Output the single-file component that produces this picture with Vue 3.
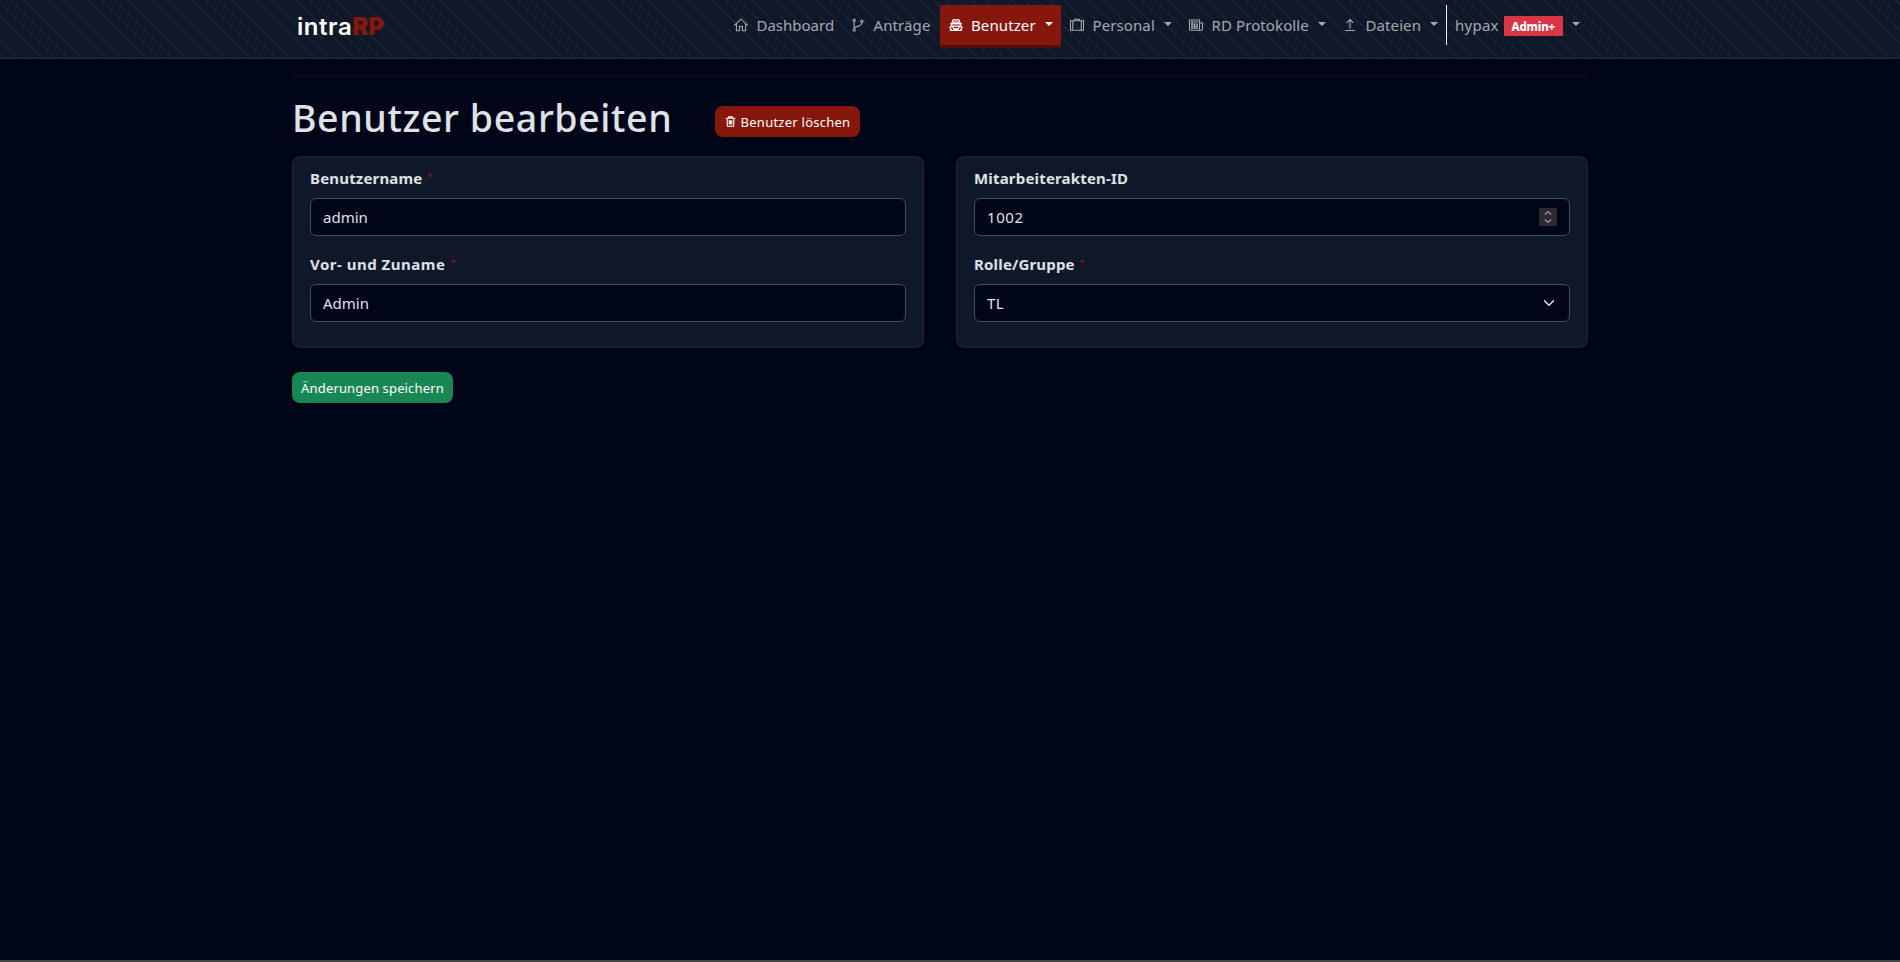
<script setup>
import { ref } from 'vue'

const nav = [
  { label: 'Dashboard', icon: 'home', cls: 'dashboard' },
  { label: 'Anträge', icon: 'branch', cls: 'requests' },
  { label: 'Benutzer', icon: 'user', cls: 'users', active: true, menu: true },
  { label: 'Personal', icon: 'suitcase', cls: 'staff', menu: true },
  { label: 'RD Protokolle', icon: 'news', cls: 'protocols', menu: true },
  { label: 'Dateien', icon: 'upload', cls: 'files', menu: true },
]
const username = ref('admin')
const fullname = ref('Admin')
const fileId = ref('1002')
const role = ref('TL')
</script>

<template>
  <div class="page">
    <header class="navbar">
      <div class="container bar">
        <a class="brand">intra<b>RP</b></a>
        <nav class="menu">
          <a v-for="n in nav" :key="n.label" class="link" :class="[n.cls, { active: n.active }]">
            <svg class="icon" viewBox="0 0 16 16" fill="none" stroke="currentColor" stroke-width="1.1">
              <path v-if="n.icon === 'home'" d="M1.2 8.4 8 2.2l6.800 6.200M3.400 6.800V13.700H6.500V9.200H9.500v4.500h3.100V6.800" />
              <g v-else-if="n.icon === 'branch'">
                <circle cx="4.200" cy="3.200" r="1.200" /><circle cx="4.200" cy="13" r="1.200" /><circle cx="11.800" cy="4.600" r="1.200" />
                <path d="M4.200 4.400v7.400M11.800 5.800c0 3-2.500 3.200-4.800 3.700-1.500.4-2.500 1-2.800 2.300" />
              </g>
              <g v-else-if="n.icon === 'user'">
                <path stroke-width="1.200" d="M4.100 6.500C4.300 3.900 5 2.700 6.100 2.700c.8 0 1.100.4 1.900.4s1.100-.4 1.900-.4c1.100 0 1.800 1.200 2 3.800" />
                <path stroke-width="1.500" d="M2 6.700h12" />
                <path stroke-width="1.300" d="M3.600 7.200v1.900h8.800V7.200M3.400 9.300 1.900 10.200l1 1.300-.4 1.900h11l-.4-1.900 1-1.300-1.500-.9M4.500 9.500 6.200 12h3.600l1.700-2.500M5 5.200h6" />
              </g>
              <g v-else-if="n.icon === 'suitcase'">
                <path d="M1.500 3.700h13v9.600h-13zM5.700 3.500V2.200h4.600v1.300M3.800 3.700v9.600M12.200 3.700v9.600" />
              </g>
              <g v-else-if="n.icon === 'news'">
                <path d="M1.500 3h10v10.300H2.600c-.7 0-1.100-.5-1.100-1.200zM11.500 6h3v6.200c0 .7-.5 1.100-1.300 1.100h-2M3 5h7M3 7h7M3 9.200h7M3 11.300h7M6.500 7v4.500M4 4v8M9 7v4.500" />
              </g>
              <path v-else d="M8 11.500V2.600M4.700 5.900 8 2.500l3.300 3.400M3.200 13.500h9.600" />
            </svg>
            <span>{{ n.label }}</span>
            <i v-if="n.menu" class="caret"></i>
          </a>
          <a class="link account">
            <span>hypax</span><em class="badge">Admin+</em><i class="caret"></i>
          </a>
        </nav>
      </div>
    </header>

    <main class="container">
      <hr />
      <div class="title">
        <h1>Benutzer bearbeiten</h1>
        <button class="btn danger">
          <svg viewBox="0 0 12 12" fill="none" stroke="currentColor" stroke-width="1.200">
            <path d="M.8 2.500h10.400M4 2.300V1h4v1.300M2.200 2.500l.4 8.700h6.800l.4-8.700M4.600 4.500v4.800M6 4.500v4.800M7.400 4.500v4.800" />
          </svg>
          <span>Benutzer löschen</span>
        </button>
      </div>
      <form @submit.prevent>
        <div class="cards">
          <section class="card">
            <label>Benutzername <sup>*</sup></label>
            <input v-model="username" class="control" type="text" />
            <label class="wide">Vor- und Zuname <sup>*</sup></label>
            <input v-model="fullname" class="control" type="text" />
          </section>
          <section class="card">
            <label>Mitarbeiterakten-ID</label>
            <div class="control field">
              <input v-model="fileId" type="text" />
              <svg class="spinner" viewBox="0 0 18 18" fill="none" stroke="#8f8f9c" stroke-width="1.500">
                <path d="M5.800 6.500 9 3.700l3.200 2.800M5.800 11.500 9 14.300l3.200-2.800" />
              </svg>
            </div>
            <label>Rolle/Gruppe <sup>*</sup></label>
            <div class="control field">
              <span>{{ role }}</span>
              <svg class="chevron" viewBox="0 0 16 16" fill="none" stroke="#dee2e6" stroke-width="2" stroke-linecap="round" stroke-linejoin="round">
                <path d="m2 5 6 6 6-6" />
              </svg>
            </div>
          </section>
        </div>
        <button class="btn save"><span>Änderungen speichern</span></button>
      </form>
    </main>
    <footer></footer>
  </div>
</template>

<style>
body { background: #000518; }
</style>

<style scoped>
* { box-sizing: border-box; }
.page {
  height: 962px;
  display: flex;
  flex-direction: column;
  background: #000518;
  color: #dee2e6;
  font: 15px/24px "Noto Sans", "Open Sans", sans-serif;
  overflow: hidden;
}
.container { width: 1296px; margin-left: 292px; }
.navbar {
  height: 59px;
  flex: none;
  border-bottom: 2px solid #1a2332;
  background: repeating-linear-gradient(45deg, transparent 0 1.3px, #1a2332 1.3px 2.4px, transparent 2.4px 9.192px) padding-box, #0f1828;
}
.bar { display: flex; justify-content: space-between; padding-top: 5px; }
.brand {
  margin: 5px 0 0 5px;
  font: 600 24px/34px Inter, "Open Sans", sans-serif;
  letter-spacing: .55px;
  color: #fff;
}
.brand b { font-weight: 900; color: #86170d; letter-spacing: 0; }
.menu { display: flex; height: 43px; }
.link {
  display: flex;
  align-items: center;
  height: 40px;
  padding: 0 8px;
  color: #a5a9b0;
  letter-spacing: .1px;
  white-space: nowrap;
}
.icon { width: 16px; height: 16px; margin: -1px 7.500px 0 0; flex: none; }
.caret {
  width: 0;
  height: 0;
  margin: -3px 0 0 auto;
  border: 4.500px solid transparent;
  border-top-color: currentColor;
  border-bottom: 0;
}
.dashboard { width: 117px; letter-spacing: 0; }
.requests { width: 98px; }
.users { width: 121px; }
.users .icon { margin-right: 7px; }
.staff { width: 119px; }
.protocols { width: 154px; }
.files { width: 112px; }
.active { background: #86170d; color: #fff; box-shadow: 0 3px #510f0c; }
.account { width: 142px; border-left: 1px solid #f0f0f0; letter-spacing: .25px; }
.badge {
  width: 59px;
  height: 20px;
  margin: 1px 0 0 5px;
  background: #dc3545;
  color: #fff;
  font-size: 11.500px;
  font-style: normal;
  font-weight: 800;
  line-height: 21px;
  letter-spacing: -.15px;
  text-align: center;
}
hr { height: 1px; margin: 16px 0 0; border: 0; background: #0b1020; }
.title { display: flex; height: 80px; }
h1 {
  width: 423px;
  margin: 18px 0 0;
  font-size: 37.500px;
  font-weight: 500;
  line-height: 48px;
  letter-spacing: .6px;
  white-space: nowrap;
}
.btn {
  display: flex;
  align-items: center;
  justify-content: center;
  height: 31px;
  padding: 1px 0 0;
  border: 0;
  border-radius: 8px;
  color: #fff;
  font: 13px/21px "Noto Sans", "Open Sans", sans-serif;
  letter-spacing: .15px;
  white-space: nowrap;
}
.danger { width: 145px; margin-top: 30px; background: #86170d; letter-spacing: .25px; }
.danger svg { width: 11px; height: 11px; margin: -1px 5px 0 0; }
.cards { display: grid; grid-template-columns: 1fr 1fr; gap: 32px; }
.card {
  height: 192px;
  padding: 8px 16px;
  border: 2px solid #172232;
  border-radius: 8px;
  background: #0f1828;
}
label { display: block; height: 24px; margin-bottom: 8px; font-weight: 700; letter-spacing: .18px; }
.wide { letter-spacing: .5px; }
sup { margin-left: 1px; color: #86170d; font-size: 9px; line-height: 0; vertical-align: 4px; }
.control {
  display: block;
  width: 100%;
  height: 38px;
  margin: 0 0 16px;
  padding: 0 12px;
  border: 1px solid #495057;
  border-radius: 6px;
  background: #000518;
  color: #dee2e6;
  font: inherit;
  outline: 0;
}
.field { display: flex; align-items: center; justify-content: space-between; }
.field input { width: 200px; padding: 0; border: 0; background: none; color: inherit; font: inherit; letter-spacing: .6px; outline: 0; }
.field > span { letter-spacing: .5px; }
.spinner { width: 18px; height: 18px; background: #2b2a33; }
.chevron { width: 16px; height: 12px; }
.save { width: 161px; margin-top: 24px; background: #198754; }
footer { height: 2px; margin-top: auto; background: #444; }
</style>
